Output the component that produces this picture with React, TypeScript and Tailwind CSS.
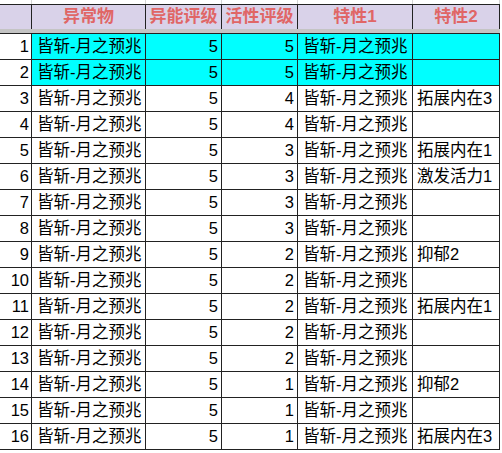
import React from 'react';

type Row = { act: number; t2: string; hi?: boolean };

const rows: Row[] = [
  { act: 5, t2: '', hi: true },
  { act: 5, t2: '', hi: true },
  { act: 4, t2: '拓展内在3' },
  { act: 4, t2: '' },
  { act: 3, t2: '拓展内在1' },
  { act: 3, t2: '激发活力1' },
  { act: 3, t2: '' },
  { act: 3, t2: '' },
  { act: 2, t2: '抑郁2' },
  { act: 2, t2: '' },
  { act: 2, t2: '拓展内在1' },
  { act: 2, t2: '' },
  { act: 2, t2: '' },
  { act: 1, t2: '抑郁2' },
  { act: 1, t2: '' },
  { act: 1, t2: '拓展内在3' },
];

const cols = 'grid grid-cols-[32px_114px_76px_76px_115px_87px]';
const font = { fontFamily: '"Liberation Sans", "Noto Sans CJK SC", sans-serif' };

export default function App() {
  return (
    <div className="w-[502px] h-[453px] bg-white overflow-hidden text-black" style={font}>
      {/* partial row above the header */}
      <div className={`${cols} h-[4px]`}>
        {[0, 1, 2, 3, 4, 5].map(i => (
          <div key={i} className="border-r border-[#d4d4d4]" />
        ))}
      </div>

      <div className="w-[500px] border-t border-[#222]">
        <div className={`${cols} h-[24px] bg-[#d9d2e9] text-[17px] font-bold text-[#e06666] leading-[24px]`}>
          <div className="border-r border-[#222]" />
          <div className="border-r border-[#222] text-center">异常物</div>
          <div className="border-r border-[#222] text-center">异能评级</div>
          <div className="border-r border-[#222] text-center">活性评级</div>
          <div className="border-r border-[#222] text-center">特性1</div>
          <div className="border-r border-[#222] text-center">特性2</div>
        </div>
        <div className="h-[5px] bg-[#c4c4c4] border-b border-[#222]" />

        {rows.map((r, i) => {
          const bg = r.hi ? 'bg-[#00ffff]' : 'bg-white';
          return (
            <div key={i} className={`${cols} h-[26px] border-b border-[#222] text-[16.5px] leading-[25px]`}>
              <div className="border-r border-[#222] bg-white text-right pr-[2px]">{i + 1}</div>
              <div className={`border-r border-[#222] ${bg} pl-[5px] whitespace-nowrap`}>皆斩-月之预兆</div>
              <div className={`border-r border-[#222] ${bg} text-right pr-[3px]`}>5</div>
              <div className={`border-r border-[#222] ${bg} text-right pr-[3px]`}>{r.act}</div>
              <div className={`border-r border-[#222] ${bg} pl-[5px] whitespace-nowrap`}>皆斩-月之预兆</div>
              <div className={`border-r border-[#222] ${bg} pl-[4px] whitespace-nowrap overflow-hidden`}>{r.t2}</div>
            </div>
          );
        })}
      </div>
    </div>
  );
}
